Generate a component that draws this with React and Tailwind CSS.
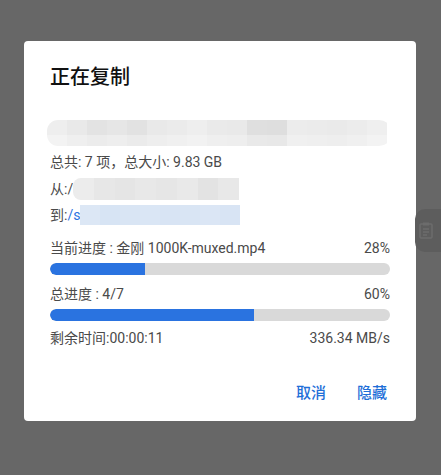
import React from "react";

const row1Top = ["#eeeeee", "#e9e9e9", "#e3e3e3", "#e6e6e6", "#e2e2e2", "#e9e9e9", "#ebebeb", "#eeeeee", "#eaeaea", "#e9e9e9", "#dfdfdf", "#dedede", "#ececec", "#ebebeb", "#eaeaea", "#ececec", "#efefef"];
const row1Bottom = ["#f3f3f3", "#efefef", "#ececec", "#eeeeee", "#ebebeb", "#eeeeee", "#f0f0f0", "#f2f2f2", "#efefef", "#eeeeee", "#e9e9e9", "#e8e8e8", "#f0f0f0", "#efefef", "#eeeeee", "#f0f0f0", "#f3f3f3"];
const fromBlocks = ["#ececec", "#e7e7e7", "#e5e5e5", "#e8e8e8", "#e6e6e6", "#e9e9e9", "#e3e3e3", "#e8e8e8"];
const toBlocks = ["#dce7f5", "#d7e4f4", "#d9e5f4", "#dae6f5", "#d8e4f4", "#d9e5f4", "#dbe6f5", "#d8e4f4"];

function ProgressBar({ percent }) {
  return (
    <div className="h-[12px] w-full rounded-full bg-[#d9d9d9] overflow-hidden">
      <div className="h-full rounded-l-full bg-[#2a73e0]" style={{ width: `${percent}%` }} />
    </div>
  );
}

export default function App() {
  return (
    <div
      className="relative min-h-[475px] bg-[#676767] pt-[41px] pl-[24px]"
      style={{ fontFamily: "Roboto, 'Noto Sans CJK SC', sans-serif" }}
    >
      {/* side handle behind overlay */}
      <div className="absolute right-0 top-[209px] w-[26px] h-[43px] rounded-l-[10px] bg-[#5d5d5d] flex items-center justify-end pr-[8px]">
        <svg width="14" height="17" viewBox="0 0 14 17" fill="none">
          <rect x="1" y="2" width="12" height="14" rx="1" stroke="#6c6c6c" strokeWidth="1.5" />
          <rect x="4" y="0.5" width="6" height="3" fill="#6c6c6c" />
          <path d="M4 7h6M4 10h6M4 13h4" stroke="#6c6c6c" strokeWidth="1.3" />
        </svg>
      </div>

      <div className="w-[392px] h-[380px] bg-white rounded-[4px] px-[26px] pt-[22px]">
        <h2 className="text-[20px] leading-[28px] text-[#111] font-medium">正在复制</h2>

        {/* blurred path */}
        <div className="mt-[29px] -ml-[3px] w-[345px] h-[26px] rounded-l-[12px] rounded-r-[14px] overflow-hidden blur-[0.6px]">
          <div className="flex h-[15px]">
            {row1Top.map((c, i) => (
              <div key={i} className="w-[20px] h-full shrink-0" style={{ background: c }} />
            ))}
          </div>
          <div className="flex h-[11px]">
            {row1Bottom.map((c, i) => (
              <div key={i} className="w-[20px] h-full shrink-0" style={{ background: c }} />
            ))}
          </div>
        </div>

        <p className="mt-[6px] text-[14px] leading-[20px] text-[#4a4a4a]">总共: 7 项，总大小: 9.83 GB</p>

        <div className="mt-[6px] flex items-center text-[14px] leading-[20px] text-[#4a4a4a]">
          <span>从:/</span>
          <div className="flex w-[166px] h-[22px] rounded-l-[8px] overflow-hidden blur-[0.5px]">
            {fromBlocks.map((c, i) => (
              <div key={i} className="flex-1 h-full" style={{ background: c }} />
            ))}
          </div>
        </div>

        <div className="mt-[5px] flex items-center text-[14px] leading-[20px] text-[#4a4a4a]">
          <span>到:<span className="text-[#2a73e0]">/s</span></span>
          <div className="flex h-[20px]">
            {toBlocks.map((c, i) => (
              <div key={i} className="w-[20px] h-full" style={{ background: c }} />
            ))}
          </div>
        </div>

        <div className="mt-[13px] flex justify-between text-[14px] leading-[20px] text-[#4a4a4a]">
          <span>当前进度 : 金刚 1000K-muxed.mp4</span>
          <span>28%</span>
        </div>
        <div className="mt-[5px]">
          <ProgressBar percent={28} />
        </div>

        <div className="mt-[9px] flex justify-between text-[14px] leading-[20px] text-[#4a4a4a]">
          <span>总进度 : 4/7</span>
          <span>60%</span>
        </div>
        <div className="mt-[5px]">
          <ProgressBar percent={60} />
        </div>

        <div className="mt-[7px] flex justify-between text-[14px] leading-[20px] text-[#4a4a4a]">
          <span>剩余时间:00:00:11</span>
          <span>336.34 MB/s</span>
        </div>

        <div className="mt-[35px] flex justify-end gap-[31px] pr-[3px] text-[15px] leading-[20px] font-medium text-[#1f6fd8]">
          <button>取消</button>
          <button>隐藏</button>
        </div>
      </div>
    </div>
  );
}
